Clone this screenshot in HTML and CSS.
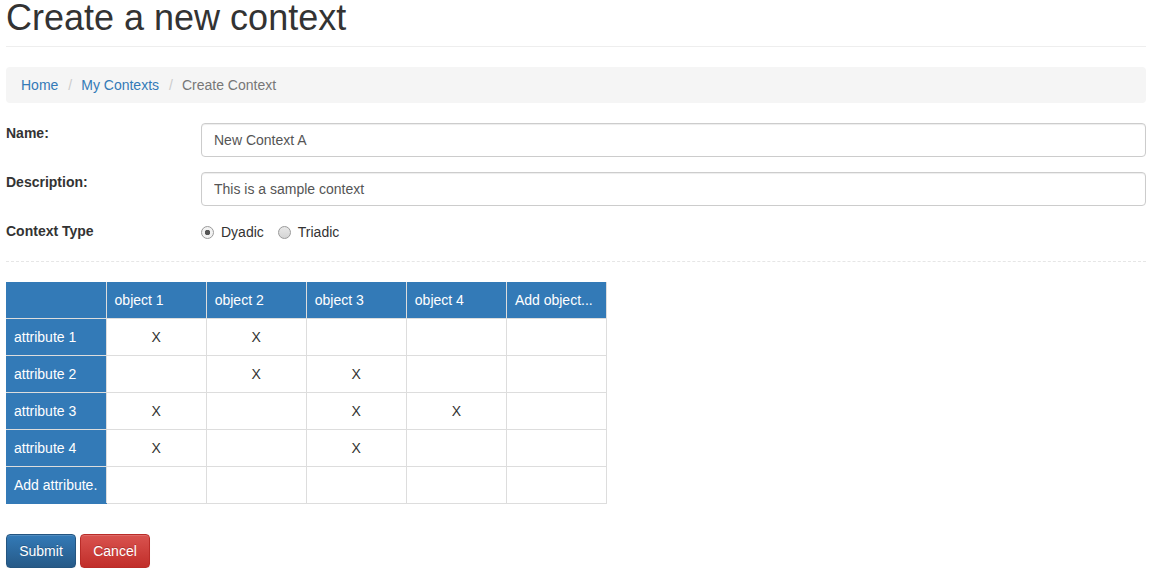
FILE: index.html
```html
<!DOCTYPE html>
<html>
<head>
<meta charset="utf-8">
<title>Create a new context</title>
<link rel="stylesheet" href="styles.css">
</head>
<body>
<div class="container">
  <div class="page-header">
    <h1 class="title">Create a new context</h1>
  </div>
  <ol class="breadcrumb">
    <li><a href="#">Home</a></li>
    <li><a href="#">My Contexts</a></li>
    <li class="active">Create Context</li>
  </ol>
  <form class="form">
    <div class="form-group">
      <label class="form-label">Name:</label>
      <input class="form-control" type="text" value="New Context A">
    </div>
    <div class="form-group">
      <label class="form-label">Description:</label>
      <input class="form-control" type="text" value="This is a sample context">
    </div>
    <div class="form-group radio-row">
      <label class="form-label">Context Type</label>
      <div class="radios">
        <label class="radio-inline"><input class="radio" type="radio" name="ctype" checked><span>Dyadic</span></label>
        <label class="radio-inline second"><input class="radio" type="radio" name="ctype"><span>Triadic</span></label>
      </div>
    </div>
    <hr class="divider">
    <table class="matrix">
      <colgroup>
        <col class="c"><col class="c"><col class="c"><col class="c"><col class="c"><col class="c">
      </colgroup>
      <thead>
        <tr>
          <th class="head corner"></th>
          <th class="head">object 1</th>
          <th class="head">object 2</th>
          <th class="head">object 3</th>
          <th class="head">object 4</th>
          <th class="head">Add object...</th>
        </tr>
      </thead>
      <tbody>
        <tr><th class="rowhead">attribute 1</th><td>X</td><td>X</td><td></td><td></td><td></td></tr>
        <tr><th class="rowhead">attribute 2</th><td></td><td>X</td><td>X</td><td></td><td></td></tr>
        <tr><th class="rowhead">attribute 3</th><td>X</td><td></td><td>X</td><td>X</td><td></td></tr>
        <tr><th class="rowhead">attribute 4</th><td>X</td><td></td><td>X</td><td></td><td></td></tr>
        <tr><th class="rowhead last">Add attribute.</th><td></td><td></td><td></td><td></td><td></td></tr>
      </tbody>
    </table>
    <div class="actions">
      <button type="button" class="btn btn-primary">Submit</button>
      <button type="button" class="btn btn-danger">Cancel</button>
    </div>
  </form>
</div>
</body>
</html>
```
FILE: styles.css
```css
html, body {
  margin: 0;
  padding: 0;
  background: #fff;
}
body {
  font-family: "Liberation Sans", Arial, Helvetica, sans-serif;
  font-size: 14px;
  line-height: 20px;
  color: #333;
}
.container {
  padding: 0 7px 0 6px;
}
.page-header {
  padding-bottom: 10px;
  border-bottom: 1px solid #eee;
  margin: 0 0 20px 0;
}
.title {
  margin: 0;
  font-size: 36px;
  line-height: 36px;
  font-weight: 500;
  color: #333;
}
.breadcrumb {
  list-style: none;
  margin: 0 0 20px 0;
  padding: 8px 15px;
  background: #f5f5f5;
  border-radius: 4px;
  display: flex;
}
.breadcrumb li + li::before {
  content: "/";
  color: #ccc;
  padding: 0 9px 0 10px;
}
.breadcrumb a {
  color: #337ab7;
  text-decoration: none;
}
.breadcrumb .active {
  color: #777;
}
.form {
  margin: 0;
}
.form-group {
  display: grid;
  grid-template-columns: 195px 1fr;
  margin-bottom: 15px;
}
.form-label {
  font-weight: bold;
  line-height: 20px;
}
.form-control {
  height: 34px;
  box-sizing: border-box;
  padding: 6px 12px;
  font-family: inherit;
  font-size: 14px;
  line-height: 20px;
  color: #555;
  background: #fff;
  border: 1px solid #ccc;
  border-radius: 4px;
  box-shadow: inset 0 1px 1px rgba(0,0,0,.075);
  margin: 0;
  width: 100%;
}
.radio-row {
  margin-bottom: 20px;
}
.radios {
  display: flex;
  align-items: center;
  height: 20px;
}
.radio-inline {
  display: flex;
  align-items: center;
  line-height: 20px;
  position: relative;
  top: 1px;
}
.radio-inline.second {
  margin-left: 14px;
}
.radio {
  -webkit-appearance: none;
  appearance: none;
  width: 13px;
  height: 13px;
  margin: 0 7px 0 0;
  border: 1px solid #9a9a9a;
  border-radius: 50%;
  box-sizing: border-box;
  background: linear-gradient(to bottom, #e8e8e8, #d4d4d4);
}
.radio:checked {
  background: radial-gradient(circle, #555 0, #555 2.5px, #f2f2f2 3px);
}
.divider {
  border: 0;
  border-top: 1px dashed #e6e6e6;
  margin: 0 0 20px 0;
  height: 0;
}
.matrix {
  border-collapse: collapse;
  table-layout: fixed;
  width: 601px;
  margin-bottom: 30px;
}
.matrix col.c {
  width: 100px;
}
.matrix th, .matrix td {
  border: 1px solid #ddd;
  padding: 8px;
  height: 20px;
  line-height: 20px;
  font-size: 14px;
  white-space: nowrap;
  overflow: hidden;
}
.matrix th {
  background: #337ab7;
  color: #fff;
  font-weight: normal;
  text-align: left;
}
.matrix thead th {
  border-top: 0;
}
.matrix .corner, .matrix .rowhead {
  border-left: 0;
}
.matrix .rowhead.last {
  border-bottom-color: #337ab7;
}
.matrix td {
  text-align: center;
  color: #333;
}
.actions {
  display: flex;
  gap: 4px;
}
.btn {
  min-width: 70px;
  height: 34px;
  box-sizing: border-box;
  padding: 6px 12px;
  font-family: inherit;
  font-size: 14px;
  line-height: 20px;
  color: #fff;
  border: 1px solid;
  border-radius: 4px;
  text-shadow: 0 -1px 0 rgba(0,0,0,.2);
  box-shadow: inset 0 1px 0 rgba(255,255,255,.15), 0 1px 1px rgba(0,0,0,.075);
  cursor: pointer;
}
.btn-primary {
  background: linear-gradient(to bottom, #337ab7 0, #265a88 100%);
  border-color: #245580;
}
.btn-danger {
  background: linear-gradient(to bottom, #d9534f 0, #c12e2a 100%);
  border-color: #b92c28;
}
```
